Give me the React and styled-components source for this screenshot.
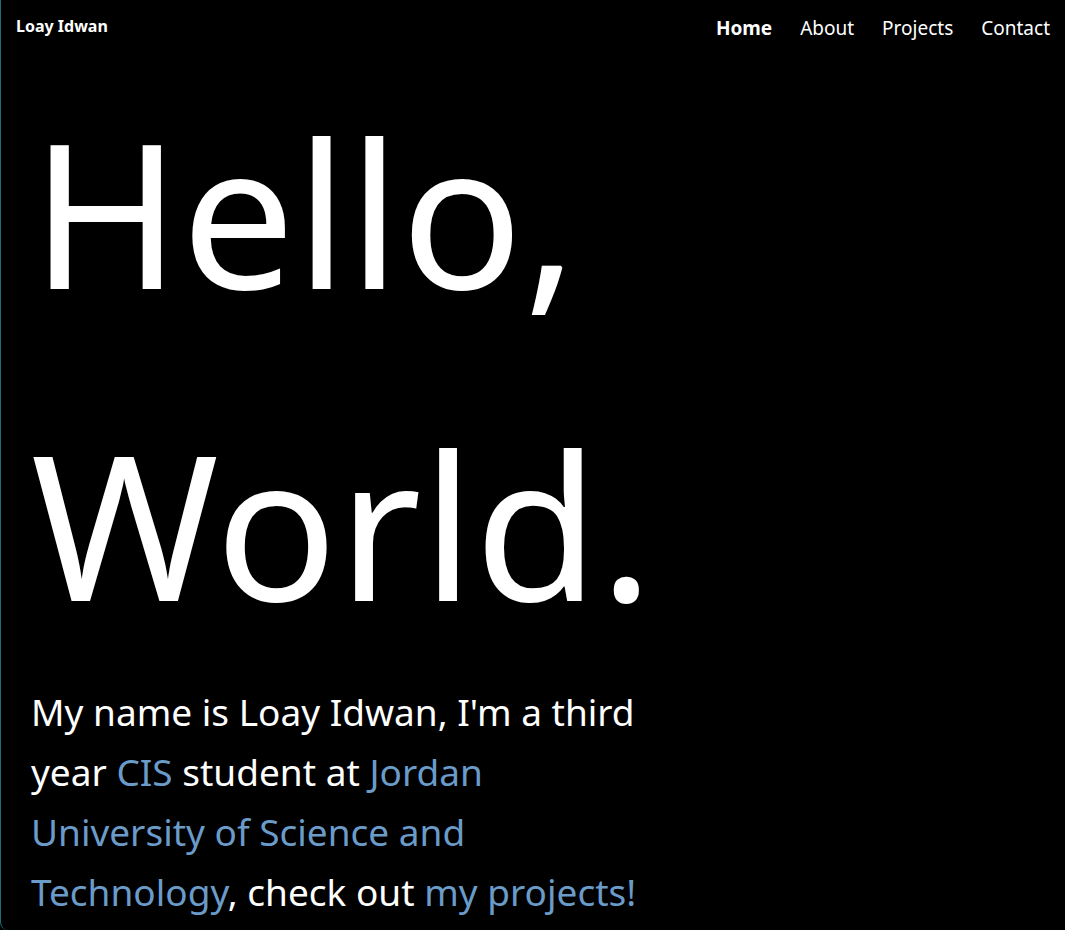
import React from "react";
import styled, { createGlobalStyle } from "styled-components";

const GlobalStyle = createGlobalStyle`
  html, body {
    margin: 0;
    padding: 0;
    background: #000;
  }
  body {
    font-family: "Noto Sans", "Open Sans", sans-serif;
    color: #fff;
  }
`;

const links = [
  { label: "Home", active: true },
  { label: "About" },
  { label: "Projects" },
  { label: "Contact" },
];

export default function App() {
  return (
    <>
      <GlobalStyle />
      <Page>
        <NavBar>
          <Brand>Loay Idwan</Brand>
          <NavLinks>
            {links.map((item) => (
              <NavLink key={item.label} href="#" active={item.active ? 1 : 0}>
                {item.label}
              </NavLink>
            ))}
          </NavLinks>
        </NavBar>

        <Hero>
          <Title>
            Hello,
            <br />
            World.
          </Title>
          <Intro>
            My name is Loay Idwan, I'm a third year <Accent>CIS</Accent> student
            at <Accent>Jordan University of Science and Technology</Accent>,
            check out <Accent as="a" href="#">my projects!</Accent>
          </Intro>
        </Hero>
      </Page>
    </>
  );
}

const Page = styled.div`
  min-height: 930px;
  box-sizing: border-box;
  border-left: 1px solid #17707a;
  border-radius: 0 0 8px 8px;
  overflow: hidden;
  background: #000;
`;

const NavBar = styled.nav`
  display: flex;
  justify-content: space-between;
  align-items: flex-start;
  padding: 14px 15px 0 15px;
  height: 55px;
  box-sizing: border-box;
`;

const Brand = styled.div`
  font-size: 16px;
  font-weight: 700;
  line-height: 24px;
`;

const NavLinks = styled.div`
  display: flex;
  gap: 28px;
  padding-top: 1px;
`;

const NavLink = styled.a`
  color: #fff;
  text-decoration: none;
  font-size: 19px;
  line-height: 26px;
  font-weight: ${(props) => (props.active ? 700 : 400)};
`;

const Hero = styled.main`
  padding: 0 30px;
`;

const Title = styled.h1`
  margin: 0;
  font-size: 202px;
  font-weight: 400;
  line-height: 312px;
  letter-spacing: 0.5px;
`;

const Intro = styled.p`
  margin: 0;
  padding-top: 3px;
  max-width: 620px;
  font-size: 37px;
  line-height: 60px;
`;

const Accent = styled.span`
  color: #6a9bc9;
  text-decoration: none;
`;
